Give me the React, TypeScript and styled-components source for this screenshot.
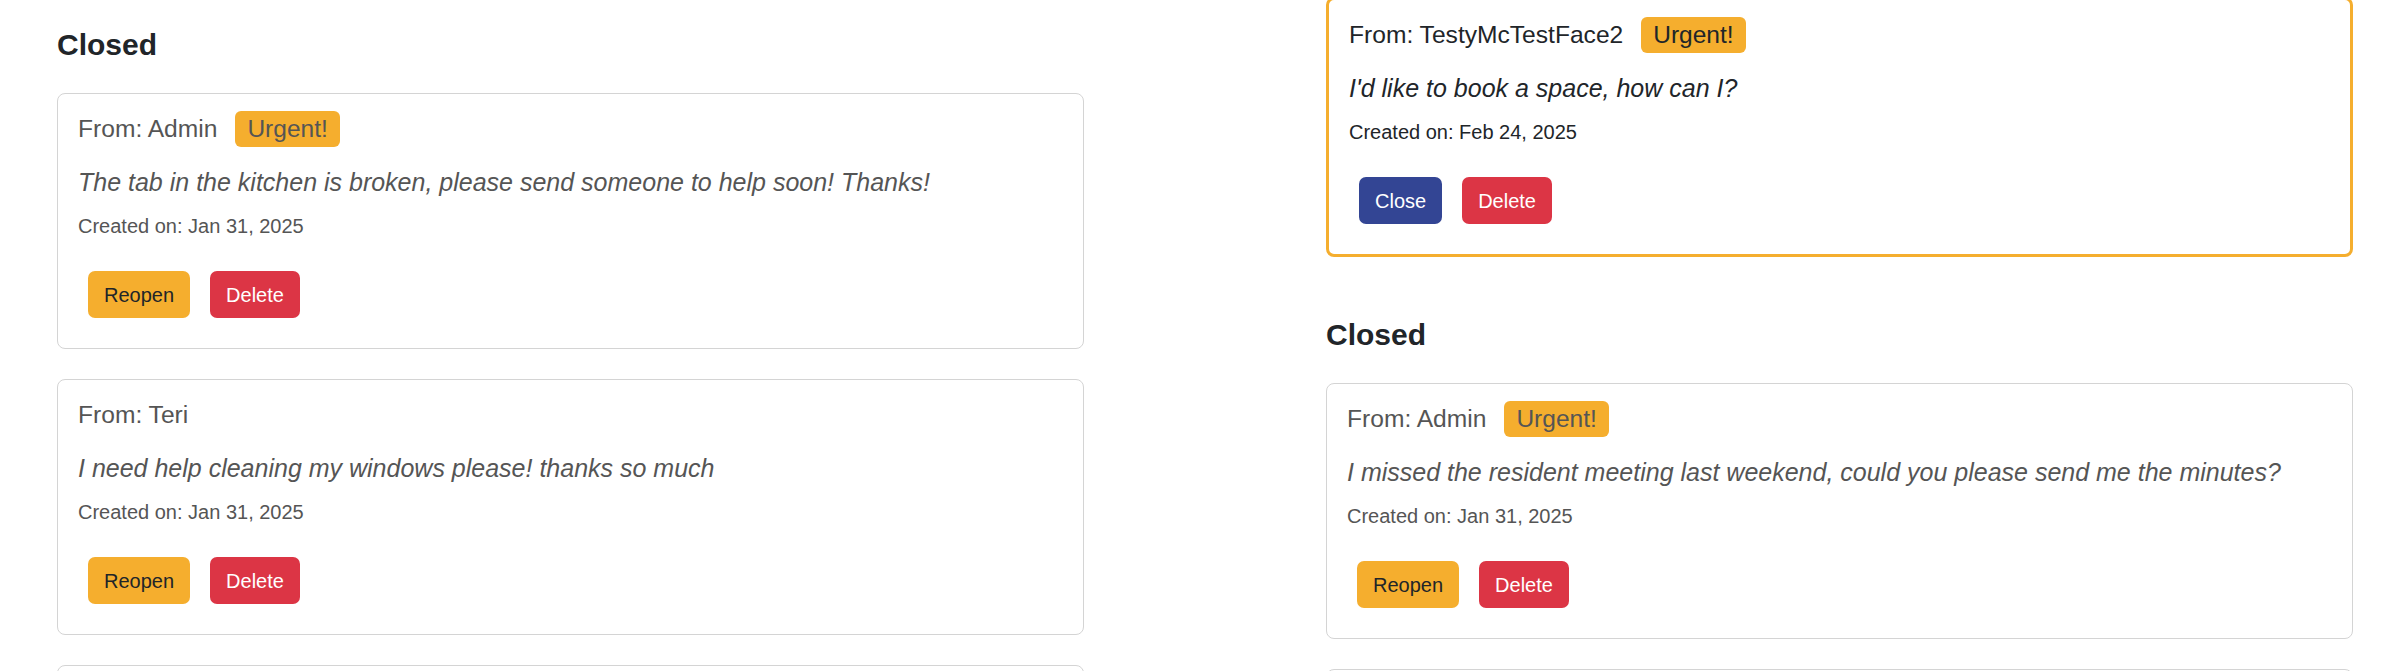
import React from "react";
import styled, { createGlobalStyle, css } from "styled-components";

const GlobalStyle = createGlobalStyle`
  html, body {
    margin: 0;
    padding: 0;
    background: #ffffff;
    overflow: hidden;
  }
  body {
    font-family: "Liberation Sans", Arial, sans-serif;
    color: #212529;
  }
  * { box-sizing: border-box; }
`;

const Page = styled.div`
  display: grid;
  grid-template-columns: 1fr 1fr;
  column-gap: 242px;
  align-items: start;
  padding: 0 40px 0 57px;
  margin-top: -3px;
`;

const Column = styled.div`
  display: flex;
  flex-direction: column;
`;

const SectionTitle = styled.h2`
  margin: 30px 0 30px;
  font-size: 30px;
  line-height: 36px;
  font-weight: 700;
  color: #212529;
`;

const Card = styled.div<{ $open?: boolean }>`
  display: flex;
  flex-direction: column;
  margin-bottom: 30px;
  padding: 17px 20px 30px;
  border-radius: 8px;
  background: #ffffff;
  ${({ $open }) =>
    $open
      ? css`
          border: 3px solid #f5ae2e;
          color: #212529;
        `
      : css`
          border: 1px solid #d4d4d4;
          color: #555555;
        `}
`;

const Header = styled.div`
  display: flex;
  align-items: center;
  height: 36px;
  margin-bottom: 17px;
  font-size: 24.6px;
  line-height: 36px;
`;

const Badge = styled.span`
  display: inline-block;
  margin-left: 18px;
  padding: 0 12px;
  border-radius: 6px;
  background: #f5ae2e;
  font-size: 24.5px;
  line-height: 36px;
`;

const Message = styled.p`
  margin: 0 0 11px;
  font-size: 25px;
  line-height: 36px;
  font-style: italic;
`;

const Created = styled.p`
  margin: 0 0 30px;
  font-size: 20px;
  line-height: 30px;
`;

const Actions = styled.div`
  display: flex;
  gap: 20px;
  padding-left: 10px;
`;

type Variant = "warning" | "danger" | "primary";

const Button = styled.button<{ $variant: Variant }>`
  height: 47px;
  padding: 0 16px;
  border: none;
  border-radius: 7px;
  font-family: "Liberation Sans", Arial, sans-serif;
  font-size: 20px;
  line-height: 30px;
  cursor: pointer;
  ${({ $variant }) =>
    $variant === "warning"
      ? css`
          background: #f5ae2e;
          color: #212529;
        `
      : $variant === "danger"
      ? css`
          background: #dc3545;
          color: #ffffff;
        `
      : css`
          background: #334594;
          color: #ffffff;
        `}
`;

type Request = {
  from: string;
  urgent: boolean;
  message: string;
  created: string;
  open: boolean;
};

const RequestCard: React.FC<{ r: Request }> = ({ r }) => (
  <Card $open={r.open}>
    <Header>
      <span>From: {r.from}</span>
      {r.urgent && <Badge>Urgent!</Badge>}
    </Header>
    <Message>{r.message}</Message>
    <Created>Created on: {r.created}</Created>
    <Actions>
      {r.open ? (
        <Button $variant="primary">Close</Button>
      ) : (
        <Button $variant="warning">Reopen</Button>
      )}
      <Button $variant="danger">Delete</Button>
    </Actions>
  </Card>
);

const leftClosed: Request[] = [
  {
    from: "Admin",
    urgent: true,
    message:
      "The tab in the kitchen is broken, please send someone to help soon! Thanks!",
    created: "Jan 31, 2025",
    open: false,
  },
  {
    from: "Teri",
    urgent: false,
    message: "I need help cleaning my windows please! thanks so much",
    created: "Jan 31, 2025",
    open: false,
  },
  {
    from: "Teri",
    urgent: false,
    message: "Could someone take a look at the heating in my flat?",
    created: "Jan 30, 2025",
    open: false,
  },
];

const rightOpen: Request = {
  from: "TestyMcTestFace2",
  urgent: true,
  message: "I'd like to book a space, how can I?",
  created: "Feb 24, 2025",
  open: true,
};

const rightClosed: Request[] = [
  {
    from: "Admin",
    urgent: true,
    message:
      "I missed the resident meeting last weekend, could you please send me the minutes?",
    created: "Jan 31, 2025",
    open: false,
  },
  {
    from: "Admin",
    urgent: false,
    message: "Please remind everyone about the bin collection day.",
    created: "Jan 30, 2025",
    open: false,
  },
];

export default function App() {
  return (
    <>
      <GlobalStyle />
      <Page>
        <Column>
          <SectionTitle>Closed</SectionTitle>
          {leftClosed.map((r, i) => (
            <RequestCard key={i} r={r} />
          ))}
        </Column>
        <Column>
          <RequestCard r={rightOpen} />
          <SectionTitle>Closed</SectionTitle>
          {rightClosed.map((r, i) => (
            <RequestCard key={i} r={r} />
          ))}
        </Column>
      </Page>
    </>
  );
}
